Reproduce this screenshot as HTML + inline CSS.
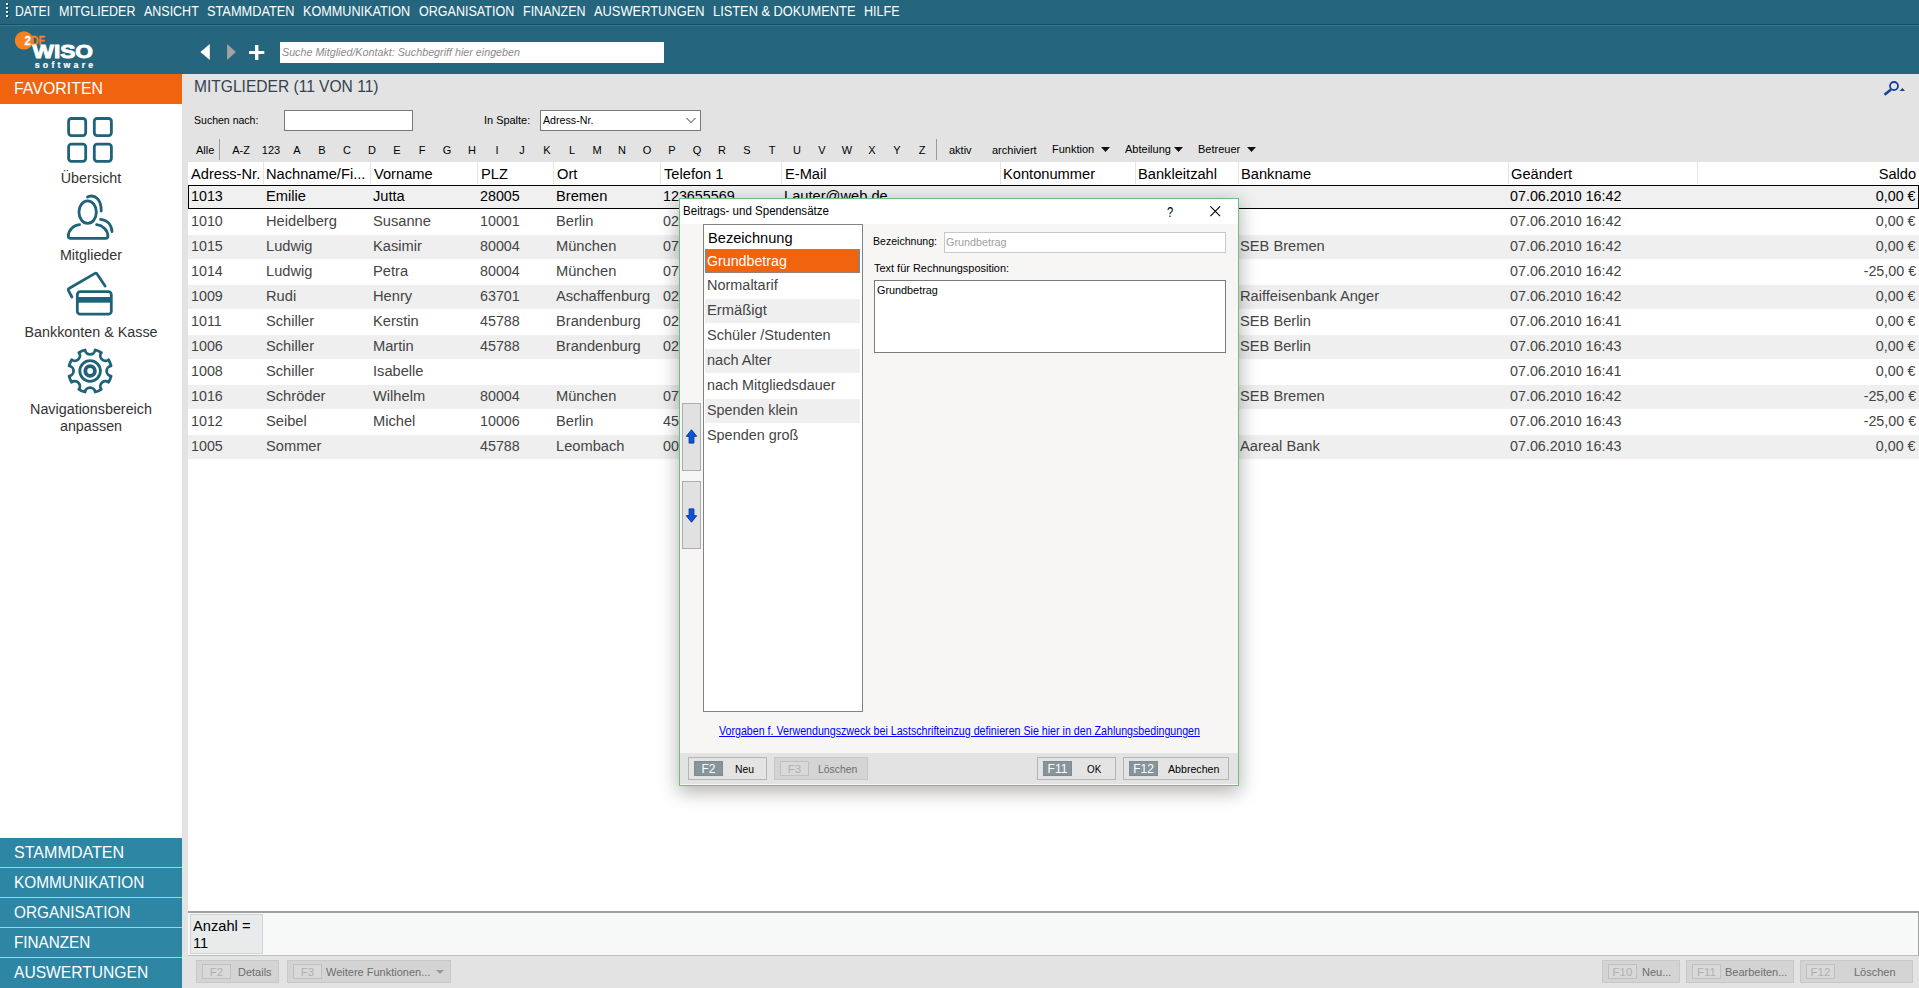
<!DOCTYPE html>
<html>
<head>
<meta charset="utf-8">
<title>WISO Mein Verein</title>
<style>
*{box-sizing:border-box;margin:0;padding:0}
html,body{width:1919px;height:988px;overflow:hidden;background:#e3e3e3;font-family:"Liberation Sans",sans-serif;}
.a{position:absolute;white-space:nowrap}
.sx{display:inline-block;transform-origin:0 50%;white-space:nowrap}
#menubar{position:absolute;left:0;top:0;width:1919px;height:25px;background:#25657d;}
#menubar .a{top:3px;color:#fff;font-size:14px;line-height:16px;}
#header{position:absolute;left:0;top:26px;width:1919px;height:48px;background:#25657d}
#search{position:absolute;left:280px;top:42px;width:384px;height:21px;background:#fff;color:#8a8a8a;font-style:italic;font-size:11px;line-height:20px;padding-left:2px;white-space:nowrap;overflow:hidden}
#sidebar{position:absolute;left:0;top:74px;width:182px;height:914px;background:#fff}
#fav{position:absolute;left:0;top:0;width:182px;height:30px;background:#f0640f;color:#fff;font-size:16.5px;line-height:29px;padding-left:14px}
.navlbl{position:absolute;left:0;width:182px;text-align:center;color:#333;font-size:15.3px;line-height:17px;transform:scaleX(.937)}
.nb{position:absolute;left:0;width:182px;height:29px;background:#2e86a5;color:#fff;font-size:16.5px;line-height:29px;padding-left:14px;white-space:nowrap}
.t11{font-size:11px;color:#000;white-space:nowrap;position:absolute;line-height:13px}
#tbl{position:absolute;left:188px;top:162px;width:1731px;height:749px;background:#fff}
.th{position:absolute;top:1px;height:22px;font-size:15.3px;line-height:22px;color:#000;white-space:nowrap;transform:scaleX(.958);transform-origin:0 50%}
.sep{position:absolute;top:0;width:1px;height:22px;background:#e4e4e4}
.row{position:absolute;left:0;width:1731px;height:24px;font-size:15.3px;line-height:22px;color:#444}
.row.alt{background:#efefef}
.row .c{position:absolute;top:0;white-space:nowrap;transform:scaleX(.958);transform-origin:0 50%}
.row .n{transform:scaleX(.935);transform-origin:0 50%}
.row .nr{transform:scaleX(.935);transform-origin:100% 50%}
.row.sel{background:#f0f0f0;border:1px solid #000;color:#000;height:24px}
.btn{position:absolute;height:23px;border:1px solid #c8c8c8;background:#d4d4d4;font-size:11px;color:#6d6d6d;white-space:nowrap}
.btn .k{position:absolute;left:5px;top:3px;width:29px;height:15px;border:1px solid #c0c0c0;background:#d9d9d9;color:#b0b0b0;font-size:11.5px;line-height:14px;text-align:center}
.btn .l{position:absolute;top:5px;line-height:13px}
</style>
</head>
<body>
<div id="menubar">
<div class="a" style="left:6px;top:3px;width:2px;height:2px;background:#e8eef0;box-shadow:1px 1px 0 #173f4e"></div>
<div class="a" style="left:6px;top:7px;width:2px;height:2px;background:#e8eef0;box-shadow:1px 1px 0 #173f4e"></div>
<div class="a" style="left:6px;top:11px;width:2px;height:2px;background:#e8eef0;box-shadow:1px 1px 0 #173f4e"></div>
<div class="a" style="left:6px;top:15px;width:2px;height:2px;background:#e8eef0;box-shadow:1px 1px 0 #173f4e"></div>
<div class="a" style="left:15.40px"><span class="sx" id="m0" style="transform:scaleX(0.8756)">DATEI</span></div>
<div class="a" style="left:59.25px"><span class="sx" id="m1" style="transform:scaleX(0.8939)">MITGLIEDER</span></div>
<div class="a" style="left:144.00px"><span class="sx" id="m2" style="transform:scaleX(0.8909)">ANSICHT</span></div>
<div class="a" style="left:207.25px"><span class="sx" id="m3" style="transform:scaleX(0.9122)">STAMMDATEN</span></div>
<div class="a" style="left:303.25px"><span class="sx" id="m4" style="transform:scaleX(0.9032)">KOMMUNIKATION</span></div>
<div class="a" style="left:419.25px"><span class="sx" id="m5" style="transform:scaleX(0.8959)">ORGANISATION</span></div>
<div class="a" style="left:523.00px"><span class="sx" id="m6" style="transform:scaleX(0.8929)">FINANZEN</span></div>
<div class="a" style="left:594.00px"><span class="sx" id="m7" style="transform:scaleX(0.9184)">AUSWERTUNGEN</span></div>
<div class="a" style="left:713.00px"><span class="sx" id="m8" style="transform:scaleX(0.9158)">LISTEN &amp; DOKUMENTE</span></div>
<div class="a" style="left:864.00px"><span class="sx" id="m9" style="transform:scaleX(0.8945)">HILFE</span></div>
</div>
<div class="a" style="left:0;top:24px;width:1919px;height:1px;background:#1c4f63"></div>
<div class="a" style="left:0;top:25px;width:1919px;height:1px;background:#38788f"></div>
<div id="header"></div>
<div id="search"><span class="sx" id="srch" style="transform:scaleX(0.9754)">Suche Mitglied/Kontakt: Suchbegriff hier eingeben</span></div>
<svg class="a" style="left:196px;top:40px" width="74" height="24" viewBox="196 40 74 24"><path d="M200.4 52 L209.8 44 V60 Z" fill="#fff"/><path d="M235.9 52 L227.1 44 V60 Z" fill="#a3a3a3"/><rect x="249" y="51" width="15.3" height="3" fill="#fff"/><rect x="255" y="45" width="3.4" height="15" fill="#fff"/></svg>
<svg class="a" style="left:8px;top:26px" width="100" height="48" viewBox="8 26 100 48" font-family="Liberation Sans, sans-serif" font-weight="bold"><circle cx="24" cy="40.4" r="9.2" fill="#f5821f"/><text x="24.6" y="44.8" font-size="12.2" fill="#fff" stroke="#fff" stroke-width="0.3" textLength="6.4" lengthAdjust="spacingAndGlyphs">2</text><text x="31" y="44.8" font-size="12.2" fill="#f5821f" stroke="#f5821f" stroke-width="0.3" textLength="14" lengthAdjust="spacingAndGlyphs">DF</text><text x="32.5" y="57.6" font-size="18.3" fill="#fff" stroke="#fff" stroke-width="0.9" textLength="60.4" lengthAdjust="spacingAndGlyphs">WISO</text><text x="34.8" y="68" font-size="8.8" fill="#fff" stroke="#fff" stroke-width="0.2" textLength="58.4" lengthAdjust="spacing">software</text></svg>
<div id="sidebar">
<div id="fav"><span class="sx" id="favt" style="transform:scaleX(0.9643)">FAVORITEN</span></div>
<div class="navlbl" style="top:95px">Übersicht</div>
<div class="navlbl" style="top:172px">Mitglieder</div>
<div class="navlbl" style="top:249px">Bankkonten &amp; Kasse</div>
<div class="navlbl" style="top:326px">Navigationsbereich<br>anpassen</div>
<div class="a" style="left:0;top:764px;width:182px;height:150px;background:#c6c6c6"></div>
<div class="nb" style="top:764px"><span class="sx" id="nb0" style="transform:scaleX(0.9747)">STAMMDATEN</span></div>
<div class="nb" style="top:794px"><span class="sx" id="nb1" style="transform:scaleX(0.9310)">KOMMUNIKATION</span></div>
<div class="nb" style="top:824px"><span class="sx" id="nb2" style="transform:scaleX(0.9298)">ORGANISATION</span></div>
<div class="nb" style="top:854px"><span class="sx" id="nb3" style="transform:scaleX(0.9248)">FINANZEN</span></div>
<div class="nb" style="top:884px;height:30px"><span class="sx" id="nb4" style="transform:scaleX(0.9464)">AUSWERTUNGEN</span></div>
</div>
<svg class="a" style="left:60px;top:110px" width="60" height="60" viewBox="60 110 60 60" fill="none" stroke="#20627a" stroke-width="2.8">
<rect x="68.6" y="118.5" width="17.1" height="17.1" rx="2.8"/>
<rect x="94.3" y="118.5" width="17.1" height="17.1" rx="2.8"/>
<rect x="68.6" y="144.2" width="17.1" height="17.1" rx="2.8"/>
<rect x="94.3" y="144.2" width="17.1" height="17.1" rx="2.8"/>
</svg>
<svg class="a" style="left:65px;top:190px" width="52" height="52" viewBox="0 0 52 52" fill="none" stroke="#20627a" stroke-width="2.8" stroke-linecap="round" stroke-linejoin="round">
<ellipse cx="22.65" cy="22.1" rx="8.7" ry="11.3"/>
<path d="M22.5 7 C30 3.5 36.5 10 36.2 21"/>
<path d="M14.6 34.7 C8 35.5 3.5 40 3.3 46 Q3.3 48.4 5.6 48.4 H40.5 Q42.9 48.4 42.9 46 C42.7 40 38 35.5 31.6 34.7"/>
<path d="M35.6 29.4 C42 30 46.5 34.5 47 41.6"/>
</svg>
<svg class="a" style="left:60px;top:268px" width="60" height="52" viewBox="60 268 60 52" fill="none" stroke="#20627a" stroke-width="2.8" stroke-linecap="round" stroke-linejoin="round">
<rect x="77.3" y="291.7" width="34" height="22.5" rx="3"/>
<rect x="77.3" y="297" width="34" height="5.7" fill="#20627a" stroke="none"/>
<path d="M71.9 297 L68.6 290.8 Q67.8 289 69.4 288.2 L94.6 273.6 Q96.4 272.6 97.4 274.4 L105.1 286.1"/>
</svg>
<svg class="a" style="left:60px;top:342px" width="60" height="58" viewBox="60 342 60 58" fill="none" stroke="#20627a" stroke-width="2.8" stroke-linejoin="round">
<path d="M95.16 350.00 A21.60 21.60 0 0 1 101.37 352.57 A5.10 5.10 0 0 0 108.53 359.73 A21.60 21.60 0 0 1 111.10 365.94 A5.10 5.10 0 0 0 111.10 376.06 A21.60 21.60 0 0 1 108.53 382.27 A5.10 5.10 0 0 0 101.37 389.43 A21.60 21.60 0 0 1 95.16 392.00 A5.10 5.10 0 0 0 85.04 392.00 A21.60 21.60 0 0 1 78.83 389.43 A5.10 5.10 0 0 0 71.67 382.27 A21.60 21.60 0 0 1 69.10 376.06 A5.10 5.10 0 0 0 69.10 365.94 A21.60 21.60 0 0 1 71.67 359.73 A5.10 5.10 0 0 0 78.83 352.57 A21.60 21.60 0 0 1 85.04 350.00 A5.10 5.10 0 0 0 95.16 350.00 Z"/>
<circle cx="90.1" cy="371" r="10.3"/>
<circle cx="90.1" cy="371" r="4.8" stroke-width="3.8"/>
</svg>
<div class="a" style="left:194px;top:77px;font-size:16px;line-height:20px;color:#35424e"><span class="sx" id="ttl" style="transform:scaleX(0.9727)">MITGLIEDER (11 VON 11)</span></div>
<div class="t11" style="left:194px;top:114px"><span class="sx" id="sn" style="transform:scaleX(0.9572)">Suchen nach:</span></div>
<div class="a" style="left:284px;top:110px;width:129px;height:21px;background:#fff;border:1px solid #7a7a7a"></div>
<div class="t11" style="left:483.5px;top:114px"><span class="sx" id="isp" style="transform:scaleX(0.9939)">In Spalte:</span></div>
<div class="a" style="left:540px;top:110px;width:161px;height:21px;background:#fff;border:1px solid #7a7a7a"><span class="t11" style="left:2px;top:3px"><span class="sx" id="adn" style="transform:scaleX(0.9698)">Adress-Nr.</span></span><svg class="a" style="right:4px;top:6px" width="10" height="7" viewBox="0 0 10 7"><path d="M0.5 1 L5 5.5 L9.5 1" fill="none" stroke="#333" stroke-width="1"/></svg></div>
<div class="t11" style="left:196px;top:144px">Alle</div>
<div class="a" style="left:219px;top:139px;width:1px;height:21px;background:#9a9a9a"></div>
<div class="t11" style="left:221px;top:144px;width:40px;text-align:center">A-Z</div>
<div class="t11" style="left:251px;top:144px;width:40px;text-align:center">123</div>
<div class="t11" style="left:277px;top:144px;width:40px;text-align:center">A</div>
<div class="t11" style="left:302px;top:144px;width:40px;text-align:center">B</div>
<div class="t11" style="left:327px;top:144px;width:40px;text-align:center">C</div>
<div class="t11" style="left:352px;top:144px;width:40px;text-align:center">D</div>
<div class="t11" style="left:377px;top:144px;width:40px;text-align:center">E</div>
<div class="t11" style="left:402px;top:144px;width:40px;text-align:center">F</div>
<div class="t11" style="left:427px;top:144px;width:40px;text-align:center">G</div>
<div class="t11" style="left:452px;top:144px;width:40px;text-align:center">H</div>
<div class="t11" style="left:477px;top:144px;width:40px;text-align:center">I</div>
<div class="t11" style="left:502px;top:144px;width:40px;text-align:center">J</div>
<div class="t11" style="left:527px;top:144px;width:40px;text-align:center">K</div>
<div class="t11" style="left:552px;top:144px;width:40px;text-align:center">L</div>
<div class="t11" style="left:577px;top:144px;width:40px;text-align:center">M</div>
<div class="t11" style="left:602px;top:144px;width:40px;text-align:center">N</div>
<div class="t11" style="left:627px;top:144px;width:40px;text-align:center">O</div>
<div class="t11" style="left:652px;top:144px;width:40px;text-align:center">P</div>
<div class="t11" style="left:677px;top:144px;width:40px;text-align:center">Q</div>
<div class="t11" style="left:702px;top:144px;width:40px;text-align:center">R</div>
<div class="t11" style="left:727px;top:144px;width:40px;text-align:center">S</div>
<div class="t11" style="left:752px;top:144px;width:40px;text-align:center">T</div>
<div class="t11" style="left:777px;top:144px;width:40px;text-align:center">U</div>
<div class="t11" style="left:802px;top:144px;width:40px;text-align:center">V</div>
<div class="t11" style="left:827px;top:144px;width:40px;text-align:center">W</div>
<div class="t11" style="left:852px;top:144px;width:40px;text-align:center">X</div>
<div class="t11" style="left:877px;top:144px;width:40px;text-align:center">Y</div>
<div class="t11" style="left:902px;top:144px;width:40px;text-align:center">Z</div>
<div class="a" style="left:936px;top:139px;width:1px;height:21px;background:#9a9a9a"></div>
<div class="t11" style="left:949px;top:144px">aktiv</div>
<div class="t11" style="left:992px;top:144px">archiviert</div>
<div class="t11" style="left:1052px;top:143px">Funktion</div>
<svg class="a" style="left:1101px;top:147px" width="9" height="5" viewBox="0 0 9 5"><path d="M0 0 H9 L4.5 5 Z" fill="#111"/></svg>
<div class="t11" style="left:1125px;top:143px">Abteilung</div>
<svg class="a" style="left:1174px;top:147px" width="9" height="5" viewBox="0 0 9 5"><path d="M0 0 H9 L4.5 5 Z" fill="#111"/></svg>
<div class="t11" style="left:1198px;top:143px">Betreuer</div>
<svg class="a" style="left:1247px;top:147px" width="9" height="5" viewBox="0 0 9 5"><path d="M0 0 H9 L4.5 5 Z" fill="#111"/></svg>
<svg class="a" style="left:1882px;top:79px" width="26" height="20" viewBox="0 0 26 20"><circle cx="12" cy="7" r="4" fill="none" stroke="#1c3fa0" stroke-width="1.8"/><path d="M9 10.5 L2.5 15.8" stroke="#1c3fa0" stroke-width="2.6" stroke-linecap="butt"/><path d="M17.5 12 H23 L20.5 9 Z" fill="#1c3fa0"/></svg>
<div id="tbl">
<div class="th" style="left:3px">Adress-Nr.</div>
<div class="th" style="left:78px">Nachname/Fi...</div>
<div class="th" style="left:186px">Vorname</div>
<div class="th" style="left:293px">PLZ</div>
<div class="th" style="left:369px">Ort</div>
<div class="th" style="left:476px">Telefon 1</div>
<div class="th" style="left:597px">E-Mail</div>
<div class="th" style="left:815px">Kontonummer</div>
<div class="th" style="left:950px">Bankleitzahl</div>
<div class="th" style="left:1053px">Bankname</div>
<div class="th" style="left:1323px">Geändert</div>
<div class="th" style="right:3px;transform-origin:100% 50%">Saldo</div>
<div class="sep" style="left:75px"></div>
<div class="sep" style="left:182px"></div>
<div class="sep" style="left:289px"></div>
<div class="sep" style="left:365px"></div>
<div class="sep" style="left:472px"></div>
<div class="sep" style="left:593px"></div>
<div class="sep" style="left:812px"></div>
<div class="sep" style="left:947px"></div>
<div class="sep" style="left:1050px"></div>
<div class="sep" style="left:1320px"></div>
<div class="sep" style="left:1509px"></div>
<div class="row sel" style="top:23px">
<div class="c n" style="left:2.0px;top:-1px">1013</div>
<div class="c" style="left:77.0px;top:-1px">Emilie</div>
<div class="c" style="left:184.0px;top:-1px">Jutta</div>
<div class="c n" style="left:291.4px;top:-1px">28005</div>
<div class="c" style="left:367.0px;top:-1px">Bremen</div>
<div class="c n" style="left:474.4px;top:-1px">123655569</div>
<div class="c" style="left:595.0px;top:-1px">Lauter@web.de</div>
<div class="c n" style="left:1321.4px;top:-1px">07.06.2010 16:42</div>
<div class="c nr" style="right:2px;top:-1px">0,00 €</div>
</div>
<div class="row" style="top:48px">
<div class="c n" style="left:3.0px;top:0px">1010</div>
<div class="c" style="left:78.0px;top:0px">Heidelberg</div>
<div class="c" style="left:185.0px;top:0px">Susanne</div>
<div class="c n" style="left:292.4px;top:0px">10001</div>
<div class="c" style="left:368.0px;top:0px">Berlin</div>
<div class="c n" style="left:475.4px;top:0px">02</div>
<div class="c n" style="left:1322.4px;top:0px">07.06.2010 16:42</div>
<div class="c nr" style="right:3px;top:0px">0,00 €</div>
</div>
<div class="row alt" style="top:73px">
<div class="c n" style="left:3.0px;top:0px">1015</div>
<div class="c" style="left:78.0px;top:0px">Ludwig</div>
<div class="c" style="left:185.0px;top:0px">Kasimir</div>
<div class="c n" style="left:292.4px;top:0px">80004</div>
<div class="c" style="left:368.0px;top:0px">München</div>
<div class="c n" style="left:475.4px;top:0px">07</div>
<div class="c" style="left:1052.0px;top:0px">SEB Bremen</div>
<div class="c n" style="left:1322.4px;top:0px">07.06.2010 16:42</div>
<div class="c nr" style="right:3px;top:0px">0,00 €</div>
</div>
<div class="row" style="top:98px">
<div class="c n" style="left:3.0px;top:0px">1014</div>
<div class="c" style="left:78.0px;top:0px">Ludwig</div>
<div class="c" style="left:185.0px;top:0px">Petra</div>
<div class="c n" style="left:292.4px;top:0px">80004</div>
<div class="c" style="left:368.0px;top:0px">München</div>
<div class="c n" style="left:475.4px;top:0px">07</div>
<div class="c n" style="left:1322.4px;top:0px">07.06.2010 16:42</div>
<div class="c nr" style="right:3px;top:0px">-25,00 €</div>
</div>
<div class="row alt" style="top:123px">
<div class="c n" style="left:3.0px;top:0px">1009</div>
<div class="c" style="left:78.0px;top:0px">Rudi</div>
<div class="c" style="left:185.0px;top:0px">Henry</div>
<div class="c n" style="left:292.4px;top:0px">63701</div>
<div class="c" style="left:368.0px;top:0px">Aschaffenburg</div>
<div class="c n" style="left:475.4px;top:0px">02</div>
<div class="c" style="left:1052.0px;top:0px">Raiffeisenbank Anger</div>
<div class="c n" style="left:1322.4px;top:0px">07.06.2010 16:42</div>
<div class="c nr" style="right:3px;top:0px">0,00 €</div>
</div>
<div class="row" style="top:148px">
<div class="c n" style="left:3.0px;top:0px">1011</div>
<div class="c" style="left:78.0px;top:0px">Schiller</div>
<div class="c" style="left:185.0px;top:0px">Kerstin</div>
<div class="c n" style="left:292.4px;top:0px">45788</div>
<div class="c" style="left:368.0px;top:0px">Brandenburg</div>
<div class="c n" style="left:475.4px;top:0px">02</div>
<div class="c" style="left:1052.0px;top:0px">SEB Berlin</div>
<div class="c n" style="left:1322.4px;top:0px">07.06.2010 16:41</div>
<div class="c nr" style="right:3px;top:0px">0,00 €</div>
</div>
<div class="row alt" style="top:173px">
<div class="c n" style="left:3.0px;top:0px">1006</div>
<div class="c" style="left:78.0px;top:0px">Schiller</div>
<div class="c" style="left:185.0px;top:0px">Martin</div>
<div class="c n" style="left:292.4px;top:0px">45788</div>
<div class="c" style="left:368.0px;top:0px">Brandenburg</div>
<div class="c n" style="left:475.4px;top:0px">02</div>
<div class="c" style="left:1052.0px;top:0px">SEB Berlin</div>
<div class="c n" style="left:1322.4px;top:0px">07.06.2010 16:43</div>
<div class="c nr" style="right:3px;top:0px">0,00 €</div>
</div>
<div class="row" style="top:198px">
<div class="c n" style="left:3.0px;top:0px">1008</div>
<div class="c" style="left:78.0px;top:0px">Schiller</div>
<div class="c" style="left:185.0px;top:0px">Isabelle</div>
<div class="c n" style="left:1322.4px;top:0px">07.06.2010 16:41</div>
<div class="c nr" style="right:3px;top:0px">0,00 €</div>
</div>
<div class="row alt" style="top:223px">
<div class="c n" style="left:3.0px;top:0px">1016</div>
<div class="c" style="left:78.0px;top:0px">Schröder</div>
<div class="c" style="left:185.0px;top:0px">Wilhelm</div>
<div class="c n" style="left:292.4px;top:0px">80004</div>
<div class="c" style="left:368.0px;top:0px">München</div>
<div class="c n" style="left:475.4px;top:0px">07</div>
<div class="c" style="left:1052.0px;top:0px">SEB Bremen</div>
<div class="c n" style="left:1322.4px;top:0px">07.06.2010 16:42</div>
<div class="c nr" style="right:3px;top:0px">-25,00 €</div>
</div>
<div class="row" style="top:248px">
<div class="c n" style="left:3.0px;top:0px">1012</div>
<div class="c" style="left:78.0px;top:0px">Seibel</div>
<div class="c" style="left:185.0px;top:0px">Michel</div>
<div class="c n" style="left:292.4px;top:0px">10006</div>
<div class="c" style="left:368.0px;top:0px">Berlin</div>
<div class="c n" style="left:475.4px;top:0px">45</div>
<div class="c n" style="left:1322.4px;top:0px">07.06.2010 16:43</div>
<div class="c nr" style="right:3px;top:0px">-25,00 €</div>
</div>
<div class="row alt" style="top:273px">
<div class="c n" style="left:3.0px;top:0px">1005</div>
<div class="c" style="left:78.0px;top:0px">Sommer</div>
<div class="c n" style="left:292.4px;top:0px">45788</div>
<div class="c" style="left:368.0px;top:0px">Leombach</div>
<div class="c n" style="left:475.4px;top:0px">00</div>
<div class="c" style="left:1052.0px;top:0px">Aareal Bank</div>
<div class="c n" style="left:1322.4px;top:0px">07.06.2010 16:43</div>
<div class="c nr" style="right:3px;top:0px">0,00 €</div>
</div>
</div>
<div class="a" style="left:188px;top:911px;width:1731px;height:2px;background:#a0a0a0"></div>
<div class="a" style="left:188px;top:913px;width:1731px;height:43px;background:#f7f9f9;border-right:1px solid #a0a0a0;border-bottom:1px solid #c0c0c0"></div>
<div class="a" style="left:190px;top:914px;width:73px;height:40px;background:#e8eaeb;border:1px solid #d0d3d4;font-size:15.3px;line-height:17px;color:#000;padding:2px 0 0 2px"><span class="sx" style="transform:scaleX(.958)">Anzahl =<br>11</span></div>
<div class="btn" style="left:196px;top:960px;width:83px"><div class="k">F2</div><div class="l" style="left:41px">Details</div></div>
<div class="btn" style="left:287px;top:960px;width:164px"><div class="k">F3</div><div class="l" style="left:38px">Weitere Funktionen...</div><svg class="a" style="right:6px;top:9px" width="8" height="4" viewBox="0 0 8 4"><path d="M0 0 H8 L4 4 Z" fill="#9a9a9a"/></svg></div>
<div class="btn" style="left:1602px;top:960px;width:78px"><div class="k">F10</div><div class="l" style="left:39px">Neu...</div></div>
<div class="btn" style="left:1686px;top:960px;width:108px"><div class="k">F11</div><div class="l" style="left:38px">Bearbeiten...</div></div>
<div class="btn" style="left:1800px;top:960px;width:113px"><div class="k">F12</div><div class="l" style="left:53px">Löschen</div></div>
<div id="dlg" class="a" style="left:679px;top:198px;width:560px;height:588px;background:#f7f6f5;border:1px solid #6dbf81;box-shadow:0 5px 18px 1px rgba(0,0,0,.30)">
<div class="a" style="left:0;top:0;width:558px;height:25px;background:#fff"></div>
<div class="a" style="left:3px;top:5px;font-size:12px;line-height:14px;color:#000"><span class="sx" id="dt" style="transform:scaleX(0.9641)">Beitrags- und Spendensätze</span></div>
<div class="a" style="left:487px;top:5px;font-size:14px;line-height:16px;color:#000"><span class="sx" style="transform:scaleX(.8)">?</span></div>
<svg class="a" style="left:530px;top:7px" width="11" height="11" viewBox="0 0 11 11"><path d="M0.4 0.4 L10.1 10.1 M10.1 0.4 L0.4 10.1" stroke="#000" stroke-width="1.1" fill="none"/></svg>
<div class="a" style="left:23px;top:25px;width:160px;height:488px;background:#fff;border:1px solid #828282"></div>
<div class="a" style="left:28px;top:29px;font-size:15.3px;line-height:20px;color:#000"><span class="sx" id="lh" style="transform:scaleX(0.9564)">Bezeichnung</span></div>
<div class="a" style="left:25px;top:50px;width:155px;height:24px;background:#f0640f;outline:1px dotted #3aa0e0;outline-offset:-1px;color:#fff;font-size:15.3px;line-height:23px;padding-left:2px"><span class="sx" id="li0" style="transform:scaleX(0.9291)">Grundbetrag</span></div>
<div class="a" style="left:25px;top:75px;width:155px;height:24px;background:#fff;color:#444;font-size:15.3px;line-height:22px;padding-left:2px"><span class="sx" id="li1" style="transform:scaleX(0.9452)">Normaltarif</span></div>
<div class="a" style="left:25px;top:100px;width:155px;height:24px;background:#efefef;color:#444;font-size:15.3px;line-height:22px;padding-left:2px"><span class="sx" id="li2" style="transform:scaleX(0.9638)">Ermäßigt</span></div>
<div class="a" style="left:25px;top:125px;width:155px;height:24px;background:#fff;color:#444;font-size:15.3px;line-height:22px;padding-left:2px"><span class="sx" id="li3" style="transform:scaleX(0.9499)">Schüler /Studenten</span></div>
<div class="a" style="left:25px;top:150px;width:155px;height:24px;background:#efefef;color:#444;font-size:15.3px;line-height:22px;padding-left:2px"><span class="sx" id="li4" style="transform:scaleX(0.9510)">nach Alter</span></div>
<div class="a" style="left:25px;top:175px;width:155px;height:24px;background:#fff;color:#444;font-size:15.3px;line-height:22px;padding-left:2px"><span class="sx" id="li5" style="transform:scaleX(0.9386)">nach Mitgliedsdauer</span></div>
<div class="a" style="left:25px;top:200px;width:155px;height:24px;background:#efefef;color:#444;font-size:15.3px;line-height:22px;padding-left:2px"><span class="sx" id="li6" style="transform:scaleX(0.9354)">Spenden klein</span></div>
<div class="a" style="left:25px;top:225px;width:155px;height:24px;background:#fff;color:#444;font-size:15.3px;line-height:22px;padding-left:2px"><span class="sx" id="li7" style="transform:scaleX(0.9417)">Spenden groß</span></div>
<div class="a" style="left:2px;top:204px;width:19px;height:68px;background:#e1e1e1;border:1px solid #adadad"><svg class="a" style="left:2px;top:25.3px" width="13" height="15" viewBox="0 0 13 15"><path d="M6.5 0.8 L11.7 7.3 H8.9 V14.1 H4.1 V7.3 H1.3 Z" fill="#0a55d8" stroke="#0b3a9a" stroke-width="1" stroke-linejoin="round"/></svg></div>
<div class="a" style="left:2px;top:282px;width:19px;height:68px;background:#e1e1e1;border:1px solid #adadad"><svg class="a" style="left:2px;top:25.6px" width="13" height="15" viewBox="0 0 13 15"><path d="M6.5 14.2 L11.7 7.7 H8.9 V0.9 H4.1 V7.7 H1.3 Z" fill="#0a55d8" stroke="#0b3a9a" stroke-width="1" stroke-linejoin="round"/></svg></div>
<div class="t11" style="left:193px;top:36px"><span class="sx" id="lb1" style="transform:scaleX(0.9599)">Bezeichnung:</span></div>
<div class="a" style="left:264px;top:33px;width:282px;height:21px;background:#fff;border:1px solid #c8c8c8"><span class="t11" style="left:1px;top:3px;color:#a0a0a0"><span class="sx" id="gb1" style="transform:scaleX(0.9795)">Grundbetrag</span></span></div>
<div class="t11" style="left:194px;top:63px"><span class="sx" id="lb2" style="transform:scaleX(0.9952)">Text für Rechnungsposition:</span></div>
<div class="a" style="left:194px;top:81px;width:352px;height:73px;background:#fff;border:1px solid #7a7a7a"><span class="t11" style="left:1.5px;top:3px"><span class="sx" id="gb2" style="transform:scaleX(0.9844)">Grundbetrag</span></span></div>
<div class="a" style="left:39px;top:525px;font-size:12px;line-height:14px;color:#0000ff"><span class="sx" id="lnk" style="transform:scaleX(0.8879)"><span style="text-decoration:underline">Vorgaben f. Verwendungszweck bei Lastschrifteinzug definieren Sie hier in den Zahlungsbedingungen</span></span></div>
<div class="a" style="left:0;top:554px;width:558px;height:31px;background:#e3e3e3"></div>
<div class="btn" style="left:8px;top:558px;width:79px;background:#e4e4e4;border-color:#b4b4b4;color:#000"><div class="k" style="background:#86949c;border-color:#7d8b93;color:#fff;font-size:12px">F2</div><div class="l" style="left:46.0px"><span class="sx" id="dbF2" style="transform:scaleX(0.9412)">Neu</span></div></div>
<div class="btn" style="left:94px;top:558px;width:94px"><div class="k">F3</div><div class="l" style="left:43.0px"><span class="sx" id="dbF3" style="transform:scaleX(0.9424)">Löschen</span></div></div>
<div class="btn" style="left:357px;top:558px;width:79px;background:#e4e4e4;border-color:#b4b4b4;color:#000"><div class="k" style="background:#86949c;border-color:#7d8b93;color:#fff;font-size:12px">F11</div><div class="l" style="left:48.5px"><span class="sx" id="dbF11" style="transform:scaleX(0.8927)">OK</span></div></div>
<div class="btn" style="left:443px;top:558px;width:106px;background:#e4e4e4;border-color:#b4b4b4;color:#000"><div class="k" style="background:#86949c;border-color:#7d8b93;color:#fff;font-size:12px">F12</div><div class="l" style="left:43.5px"><span class="sx" id="dbF12" style="transform:scaleX(0.9658)">Abbrechen</span></div></div>
</div>
</body>
</html>
